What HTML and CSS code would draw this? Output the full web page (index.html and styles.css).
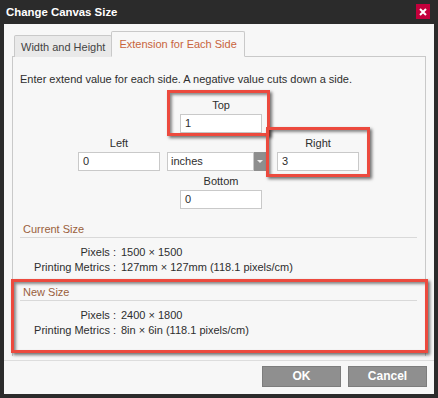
FILE: index.html
```html
<!DOCTYPE html>
<html>
	<head>
		<meta name="viewport" content="width=device-width, initial-scale=1" />
		<title>Change Canvas Size</title>
		<link rel="stylesheet" href="styles.css">
	</head>
	<body>
		<div class=Window>
			<div class=TitleBar>
				<span class=TitleText>Change Canvas Size</span>
				<div class=CloseButton>
					<svg width="8" height="8" viewBox="0 0 8 8"><path d="M1 1 L7 7 M7 1 L1 7" stroke="#fff" stroke-width="2"/></svg>
				</div>
			</div>

			<div class=Content>
				<div class=Tabs>
					<div class=Tab>Width and Height</div>
					<div class="Tab Active">Extension for Each Side</div>
				</div>

				<div class=TabPanel>
					<div class=Instruction>Enter extend value for each side. A negative value cuts down a side.</div>

					<div class=SideGrid>
						<div class="Field TopField">
							<label>Top</label>
							<div class=Input>1</div>
						</div>
						<div class="Field LeftField">
							<label>Left</label>
							<div class=Input>0</div>
						</div>
						<div class=Unit>
							<div class=UnitValue>inches</div>
							<div class=UnitArrow>
								<svg width="6" height="4" viewBox="0 0 6 4"><path d="M0 0 H6 L3 3 Z" fill="#eee"/></svg>
							</div>
						</div>
						<div class="Field RightField">
							<label>Right</label>
							<div class=Input>3</div>
						</div>
						<div class="Field BottomField">
							<label>Bottom</label>
							<div class=Input>0</div>
						</div>
					</div>

					<div class="SizeGroup CurrentGroup">
						<div class=GroupHeader>Current Size</div>
						<div class=Metrics>
							<div class=MetricLabel>Pixels :</div>
							<div class=MetricValue>1500 × 1500</div>
							<div class=MetricLabel>Printing Metrics :</div>
							<div class=MetricValue>127mm × 127mm (118.1 pixels/cm)</div>
						</div>
					</div>

					<div class="SizeGroup NewGroup">
						<div class=GroupHeader>New Size</div>
						<div class=Metrics>
							<div class=MetricLabel>Pixels :</div>
							<div class=MetricValue>2400 × 1800</div>
							<div class=MetricLabel>Printing Metrics :</div>
							<div class=MetricValue>8in × 6in (118.1 pixels/cm)</div>
						</div>
					</div>
				</div>

				<div class=Footer>
					<div class=Button>OK</div>
					<div class=Button>Cancel</div>
				</div>
			</div>

			<!-- annotation highlights drawn over the dialog -->
			<div class="Highlight HighlightTop"></div>
			<div class="Highlight HighlightRight"></div>
			<div class="Highlight HighlightNew"></div>
		</div>
	</body>
</html>
```

FILE: styles.css
```css
:root
{
	--frame: #2b2b2b;
	--paper: #f7f7f7;
	--line: #c9c9c9;
	--text: #2e2e2e;
	--accent: #c8643c;
	--header: #9a5f3c;
	--highlight: #ec4a3e;
}

html,
body
{
	margin: 0;
	padding: 0;
	background: var(--frame);
	font-family: "Liberation Sans", Arial, sans-serif;
	font-size: 11px;
	color: var(--text);
}

.Window
{
	position: relative;
	width: 438px;
	height: 398px;
	display: flex;
	flex-direction: column;
	background: var(--frame);
}

.TitleBar
{
	height: 24px;
	display: flex;
	align-items: center;
	justify-content: space-between;
	padding: 0 8px 0 6px;
}

.TitleText
{
	color: #fff;
	font-weight: bold;
	font-size: 11.4px;
}

.CloseButton
{
	width: 14px;
	height: 15px;
	background: #c4003c;
	display: flex;
	align-items: center;
	justify-content: center;
	margin-top: -1px;
}

.Content
{
	flex: 1;
	margin: 0 4px 4px 4px;
	background: var(--paper);
	display: flex;
	flex-direction: column;
}

.Tabs
{
	display: flex;
	align-items: flex-end;
	padding: 7px 0 0 10px;
	margin-bottom: -1px;
	position: relative;
	z-index: 1;
}

.Tab
{
	height: 21px;
	padding: 0 6px;
	line-height: 22px;
	background: #e9e9e9;
	border: 1px solid var(--line);
	border-bottom: none;
	border-radius: 2px 2px 0 0;
	color: #444;
}

.Tab.Active
{
	height: 24px;
	line-height: 24px;
	padding: 0 7px;
	background: var(--paper);
	color: var(--accent);
	border-bottom: 1px solid var(--paper);
	margin-left: -1px;
}

.TabPanel
{
	margin: 0 8px;
	height: 300px;
	border: 1px solid var(--line);
	border-bottom: none;
	padding: 0 7px;
	box-sizing: border-box;
}

.Instruction
{
	margin-top: 14px;
	line-height: 16px;
}

.SideGrid
{
	display: grid;
	grid-template-columns: 82px 99px 82px;
	grid-template-rows: auto auto auto;
	margin: 10px 0 0 58px;
	row-gap: 2px;
}

.Field
{
	display: flex;
	flex-direction: column;
	align-items: stretch;
	width: 82px;
}

.Field label
{
	text-align: center;
	line-height: 17px;
}

.Input
{
	height: 19px;
	box-sizing: border-box;
	background: #fff;
	border: 1px solid var(--line);
	line-height: 17px;
	padding-left: 4px;
}

.TopField,
.BottomField
{
	grid-column: 2;
	justify-self: end;
	margin-right: -3px;
}

.TopField
{
	grid-row: 1;
}

.BottomField
{
	grid-row: 3;
}

.LeftField
{
	grid-row: 2;
	grid-column: 1;
}

.RightField
{
	grid-row: 2;
	grid-column: 3;
	margin-left: 18px;
}

.Unit
{
	grid-row: 2;
	grid-column: 2;
	align-self: end;
	display: flex;
	height: 19px;
	margin-left: 7px;
	width: 99px;
}

.UnitValue
{
	flex: 1;
	box-sizing: border-box;
	background: #fff;
	border: 1px solid var(--line);
	line-height: 17px;
	padding-left: 3px;
}

.UnitArrow
{
	width: 12px;
	background: #8e8e8e;
	display: flex;
	align-items: center;
	justify-content: center;
}

.SizeGroup
{
	margin-top: 12px;
}

.NewGroup
{
	margin-top: 9px;
}

.GroupHeader
{
	color: var(--header);
	line-height: 16px;
	padding: 0 0 0 3px;
	border-bottom: 1px solid #d9d9d9;
	margin-right: 1px;
}

.Metrics
{
	display: grid;
	grid-template-columns: 96px auto;
	line-height: 15px;
	margin-top: 7px;
}

.MetricLabel
{
	text-align: right;
}

.MetricValue
{
	padding-left: 5px;
}

.Footer
{
	flex: 1;
	border-top: 1px solid #ddd;
	margin-top: 4px;
	display: flex;
	justify-content: flex-end;
	align-items: flex-start;
	gap: 7px;
	padding: 5px 7px 0 0;
}

.Button
{
	width: 79px;
	height: 21px;
	box-sizing: border-box;
	background: #8f8f8f;
	border: 1px solid #7d7d7d;
	color: #fff;
	font-weight: bold;
	font-size: 12px;
	text-align: center;
	line-height: 19px;
}

.Highlight
{
	position: absolute;
	border: 3px solid var(--highlight);
	box-shadow: 2px 2px 3px rgba(0,0,0,0.55), inset 2px 2px 3px rgba(0,0,0,0.45);
	box-sizing: border-box;
}

.HighlightTop
{
	left: 167px;
	top: 90px;
	width: 103px;
	height: 46px;
}

.HighlightRight
{
	left: 266px;
	top: 127px;
	width: 104px;
	height: 50px;
}

.HighlightNew
{
	left: 11px;
	top: 279px;
	width: 417px;
	height: 74px;
}
```
